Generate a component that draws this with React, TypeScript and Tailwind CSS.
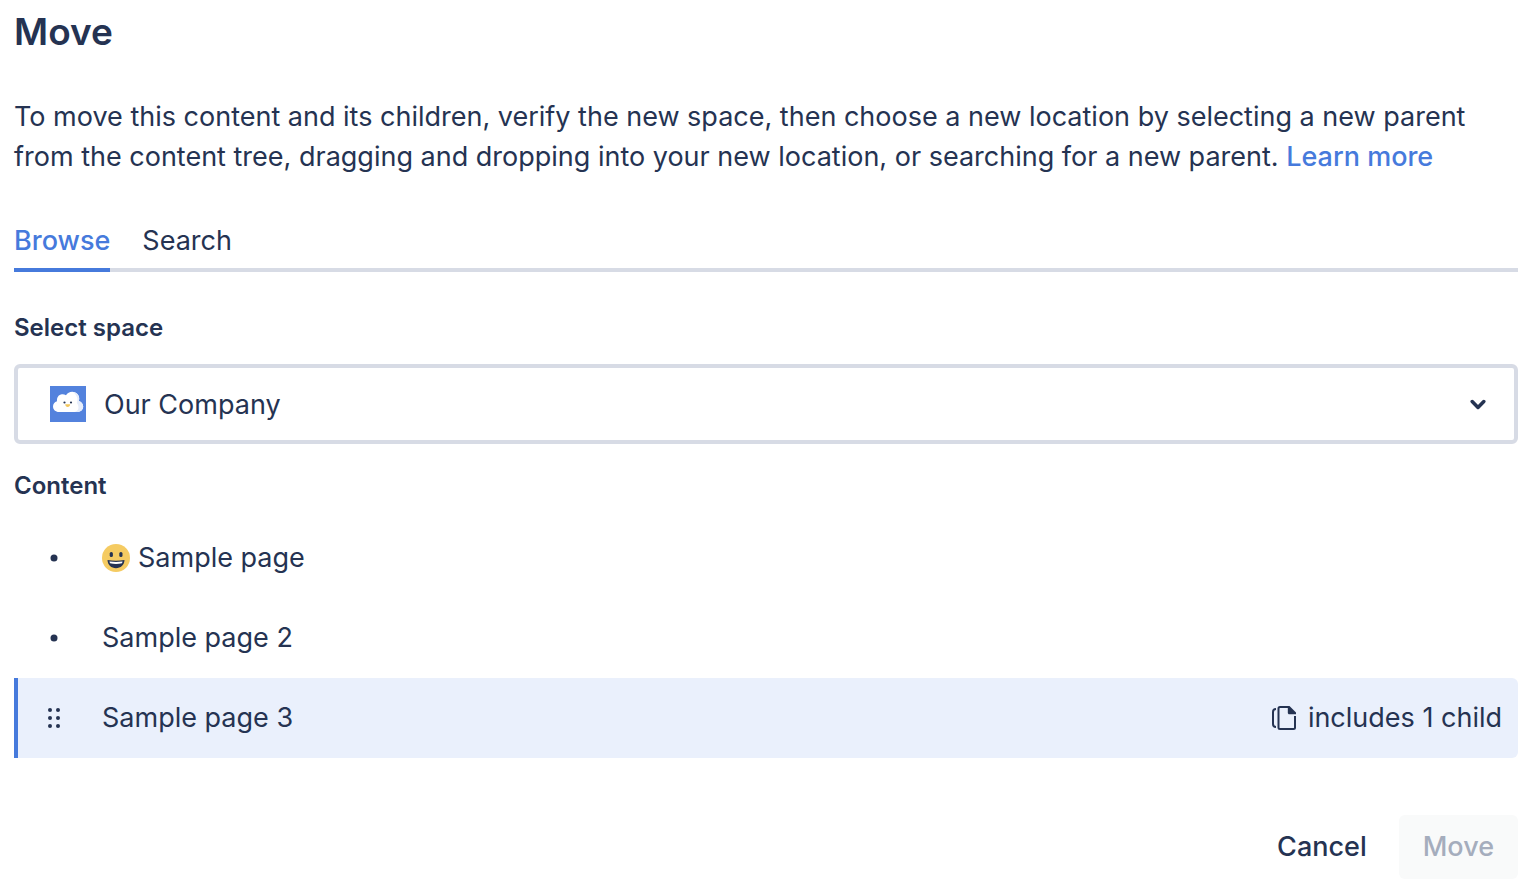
import type { ReactNode } from "react";

function CloudAvatar() {
  return (
    <svg viewBox="0 0 36 36" className="size-9 shrink-0" aria-hidden="true">
      <rect width="36" height="36" fill="#5382dd" />
      <path
        d="M9 26C5.500 26 3 23.500 3 20.500c0-2.500 1.500-4.500 4-5.300C6.500 11.500 8.700 8.500 12 8.200c1.500-.1 2.800.2 4 1C17.300 7 19.700 5.800 22.200 5.800c4 0 7 3 7 6.700 0 .9-.1 1.700-.4 2.500 2.500.7 4.400 2.900 4.400 5.500 0 3-2.500 5.500-5.700 5.500Z"
        fill="#fff"
      />
      <path
        d="M23 5.900c3.500.4 6.200 3.200 6.200 6.600 0 .9-.1 1.700-.4 2.500 2.500.7 4.400 2.900 4.400 5.500 0 3-2.500 5.500-5.700 5.500H24c3.500-.6 5-2.800 4.300-6-.3-1.400-.9-2.200-1.600-3 1.800-3.600.3-8-3.700-11.100Z"
        fill="#e6edfb"
      />
      <circle cx="14.500" cy="16.500" r="1.100" fill="#253352" />
      <circle cx="21" cy="16.500" r="1.100" fill="#253352" />
      <path d="M15.200 18.300h5c-.2 1.700-1.100 2.700-2.500 2.700s-2.300-1-2.500-2.700Z" fill="#f2c65c" />
    </svg>
  );
}

function GrinningFace() {
  return (
    <svg viewBox="0 0 28 28" className="size-7 shrink-0" role="img" aria-label="Grinning face">
      <circle cx="14" cy="14" r="14" fill="#f5cb62" />
      <rect x="7.700" y="8" width="3.200" height="5" rx="1.500" fill="#253352" />
      <rect x="17.300" y="8" width="3.200" height="5" rx="1.500" fill="#253352" />
      <path d="M5.500 16c5.600 1 11.400 1 17 0-.2 5-3.800 8.200-8.500 8.200S5.700 21 5.500 16Z" fill="#253352" />
      <path d="M7.500 17.500c4.400.6 8.600.6 13 0-.1.800-.3 1.300-.6 1.800-3.800.9-8 .9-11.800 0-.3-.5-.5-1-.6-1.800Z" fill="#fff" />
    </svg>
  );
}

function Bullet() {
  return (
    <svg viewBox="0 0 16 16" className="size-4" aria-hidden="true">
      <circle cx="8" cy="8" r="3.500" fill="#253352" />
    </svg>
  );
}

function DragHandle() {
  return (
    <svg viewBox="0 0 16 24" className="h-6 w-4" fill="#253352" aria-hidden="true">
      <circle cx="4" cy="4" r="2" />
      <circle cx="12" cy="4" r="2" />
      <circle cx="4" cy="12" r="2" />
      <circle cx="12" cy="12" r="2" />
      <circle cx="4" cy="20" r="2" />
      <circle cx="12" cy="20" r="2" />
    </svg>
  );
}

function PagesIcon() {
  return (
    <svg viewBox="0 0 24 24" className="size-6" fill="none" stroke="#253352" aria-hidden="true">
      <path d="M4 3C2 3 1 4 1 6v12c0 2 1 3 3 3" strokeWidth="2" />
      <path d="M17 1H8C7.100 1 6.500 1.600 6.500 2.500v19c0 .9.600 1.500 1.500 1.500h13.500c.9 0 1.500-.6 1.500-1.500V10" strokeWidth="2" />
      <path d="M15.800 0H17.500L24 6.500V8.200h-6.700c-.9 0-1.500-.6-1.500-1.500Z" fill="#253352" stroke="none" />
    </svg>
  );
}

function TreeItem({ marker, children, note, selected }: {
  marker: ReactNode;
  children: ReactNode;
  note?: ReactNode;
  selected?: boolean;
}) {
  return (
    <li
      className={
        selected
          ? "flex h-20 items-center rounded-r-md border-l-4 border-[#467adc] bg-[#eaf0fc] pr-4"
          : "flex h-20 items-center border-l-4 border-transparent pr-4"
      }
    >
      <span className="flex w-[84px] justify-start pl-7">{marker}</span>
      <span className="flex flex-1 items-center gap-2">{children}</span>
      {note}
    </li>
  );
}

export default function App() {
  return (
    <main className="bg-white pt-2 pr-4 pb-2 pl-[14px] font-['Inter',sans-serif] text-[27px] leading-10 text-[#253352]">
      <h1 className="text-[37px] leading-12 font-semibold">Move</h1>
      <p className="mt-[41px]">
        To move this content and its children, verify the new space, then choose a new location by selecting a new parent from the content tree, dragging and dropping into your new location, or searching for a new parent.{" "}
        <a href="#" className="font-medium text-[#467adc]">Learn more</a>
      </p>

      <div role="tablist" className="mt-11 flex gap-8 shadow-[inset_0_-4px_0_#d7dbe5]">
        <button type="button" role="tab" aria-selected="true" className="border-b-4 border-[#467adc] pb-[7px] font-medium text-[#467adc]">
          Browse
        </button>
        <button type="button" role="tab" aria-selected="false" className="border-b-4 border-transparent pb-[7px]">
          Search
        </button>
      </div>

      <label htmlFor="space" className="mt-10 block text-2xl leading-8 font-semibold">Select space</label>
      <div className="mt-5 grid h-20 items-center rounded-md border-4 border-[#d7dbe5]">
        <span className="pointer-events-none col-start-1 row-start-1 flex items-center justify-between pr-7 pl-8">
          <CloudAvatar />
          <svg viewBox="0 0 16 16" className="size-4" fill="none" stroke="#253352" strokeWidth="3.500" strokeLinecap="round" strokeLinejoin="round" aria-hidden="true">
            <path d="m2.200 5.500 5.800 6 5.800-6" />
          </svg>
        </span>
        <select id="space" className="col-start-1 row-start-1 h-full w-full appearance-none bg-transparent pt-0.5 pr-14 pl-[86px]">
          <option>Our Company</option>
        </select>
      </div>

      <h2 className="mt-[26px] text-2xl leading-8 font-semibold">Content</h2>
      <ul className="mt-4">
        <TreeItem marker={<Bullet />}>
          <GrinningFace />
          <span>Sample page</span>
        </TreeItem>
        <TreeItem marker={<Bullet />}>Sample page 2</TreeItem>
        <TreeItem
          selected
          marker={<DragHandle />}
          note={
            <span className="flex items-center gap-3">
              <PagesIcon />
              <span>includes 1 child</span>
            </span>
          }
        >
          Sample page 3
        </TreeItem>
      </ul>

      <footer className="mt-[57px] flex justify-end gap-2">
        <button type="button" className="h-16 rounded-md px-6 font-medium">Cancel</button>
        <button type="button" disabled className="h-16 rounded-md bg-[#f9fafa] px-6 font-medium text-[#a5adbd]">Move</button>
      </footer>
    </main>
  );
}
